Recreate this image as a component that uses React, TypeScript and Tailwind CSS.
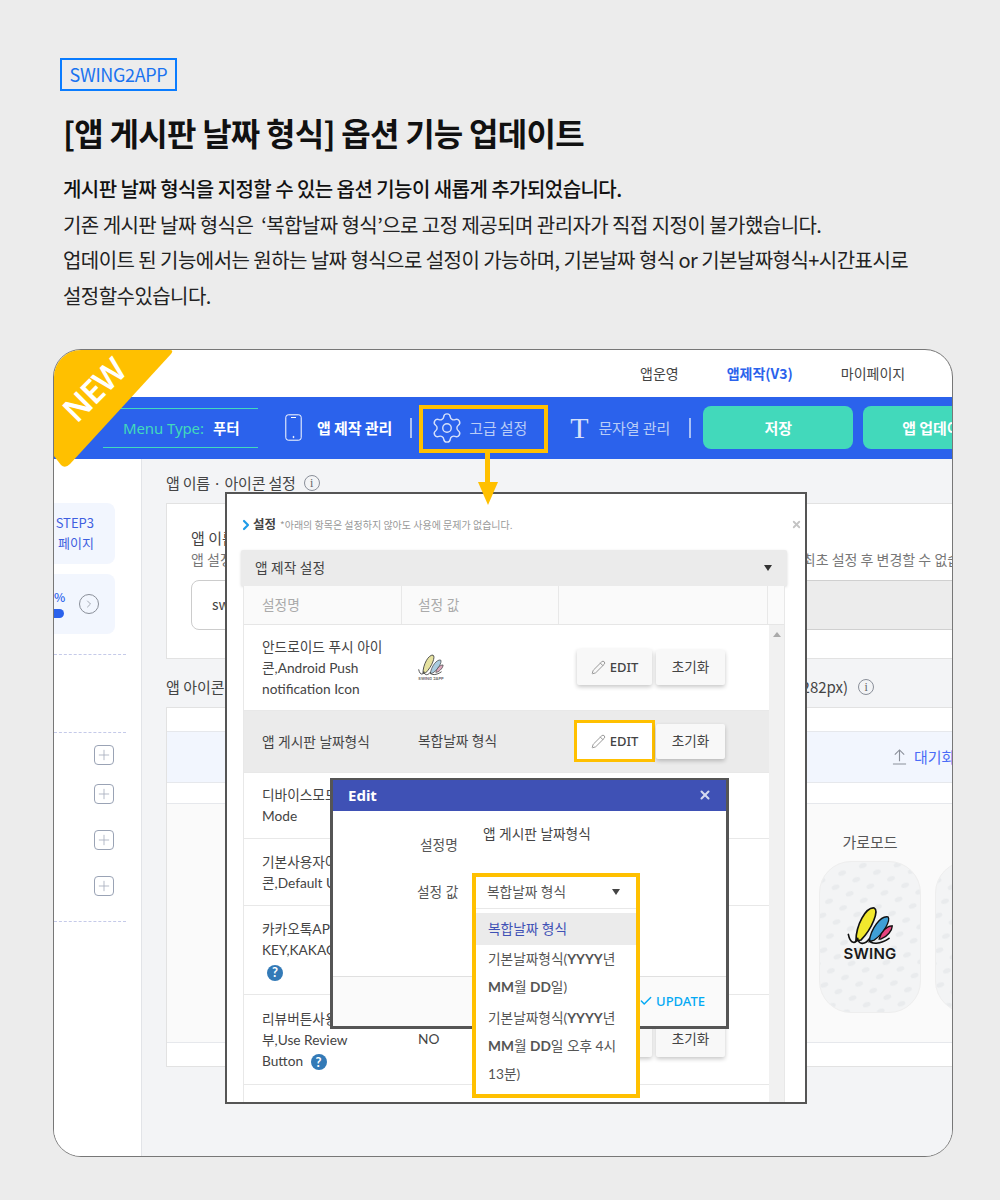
import React from "react";
import { Settings, Pencil, Check, ChevronRight, X } from "lucide-react";

const KR = { fontFamily: '"Noto Sans CJK KR", sans-serif' };
const TB = { fontFamily: 'Lato, "Noto Sans CJK KR", sans-serif' };
const NS = { fontFamily: '"Noto Sans", "Noto Sans CJK KR", sans-serif' };

function Logo({ className, small }: { className: string; small?: boolean }) {
  return (
    <div className={`flex flex-col items-center ${className}`}>
      <svg viewBox="318 742 142 120" className="w-full block">
        <path d="M345 848C345 800 375 745 400 748C415 755 395 810 360 845Z" fill={small ? "#e6e2a0" : "#f2e82d"} stroke={small ? "#444" : "#111"} strokeWidth="5" />
        <path d="M385 850C390 810 420 770 442 775C450 785 430 825 400 845Z" fill={small ? "#a9cbe0" : "#3f9fd6"} stroke={small ? "#444" : "#111"} strokeWidth="4" />
        <path d="M415 842C420 820 440 800 455 802C455 815 440 835 420 842Z" fill={small ? "#e0a9c0" : "#e8447f"} stroke={small ? "#444" : "#111"} strokeWidth="4" />
        <path d="M322 828C328 858 345 858 350 838C352 860 372 860 385 842C388 860 420 858 445 840" fill="none" stroke={small ? "#444" : "#111"} strokeWidth="5" strokeLinecap="round" />
      </svg>
      <span className={small ? "text-[4px] leading-[5px] text-[#666] font-semibold whitespace-nowrap" : "text-[15px] leading-[15px] font-semibold text-[#1a1a1a] tracking-[0.2px]"} style={{ fontFamily: "Inter, sans-serif" }}>
        {small ? "SWING 2APP" : "SWING"}
      </span>
    </div>
  );
}

function Info() {
  return (
    <span className="inline-flex items-center justify-center w-4 h-4 rounded-full border border-[#8a8f99] text-[12px] leading-none text-[#666]" style={{ fontFamily: '"Liberation Serif", serif' }}>
      i
    </span>
  );
}

function PlusBox() {
  return (
    <span className="flex items-center justify-center w-5 h-5 rounded-[4px] border border-[#9aa3b5]">
      <svg viewBox="0 0 14 14" className="w-3 h-3">
        <path d="M7 1v12M1 7h12" stroke="#a8afbf" strokeWidth="1" />
      </svg>
    </span>
  );
}

function Help() {
  return (
    <span className="inline-flex items-center justify-center w-4 h-4 rounded-full bg-[#337ab7] text-white text-[13px] font-bold leading-none align-middle">?</span>
  );
}

function IconTile() {
  return (
    <div className="relative w-[102px] h-[152px] shrink-0 rounded-[32px] bg-[#f3f4f5] border border-[#eeeeee] overflow-hidden flex items-center justify-center">
      <svg className="absolute inset-0 w-full h-full">
        <defs>
          <pattern id="tile" width="22" height="22" patternUnits="userSpaceOnUse" patternTransform="rotate(-20)">
            <ellipse cx="6" cy="7" rx="4" ry="2.5" fill="#e9ebed" />
            <ellipse cx="17" cy="18" rx="4" ry="2.5" fill="#e9ebed" />
          </pattern>
        </defs>
        <rect width="100%" height="100%" fill="url(#tile)" />
      </svg>
      <Logo className="relative w-[47px] -mt-[6px]" />
    </div>
  );
}

function Btns({ hl }: { hl?: boolean }) {
  return (
    <div className="flex items-center gap-1" style={NS}>
      <div className={hl ? "border-[3px] border-[#ffc000] -m-[3px] bg-white" : ""}>
        <button className={`flex items-center justify-center gap-1 w-[75px] h-9 rounded-[2px] text-[13px] font-medium text-[#444] ${hl ? "bg-white" : "bg-[#f8f8f8] shadow-[0_2px_4px_rgba(0,0,0,0.22)]"}`}>
          <Pencil className="w-[15px] h-[15px] text-[#999]" strokeWidth={1.6} />
          EDIT
        </button>
      </div>
      <button className="w-[69px] h-[35px] rounded-[2px] bg-[#f8f8f8] text-[13.6px] text-[#444] shadow-[0_2px_4px_rgba(0,0,0,0.22)]">초기화</button>
    </div>
  );
}

function Row({ h, name, value, hl, btns, edit }: { h: string; name: React.ReactNode; value?: React.ReactNode; hl?: boolean; btns?: boolean; edit?: boolean }) {
  return (
    <div className={`flex items-center border-b border-[#e8e8e8] ${h} ${hl ? "bg-[#ebebeb]" : "bg-white"}`}>
      <div className="w-[158px] shrink-0 pl-[18px] text-[13.7px] leading-[21px] text-[#444] whitespace-nowrap overflow-hidden">{name}</div>
      <div className="w-[157px] shrink-0 pl-4 text-[13.7px] text-[#444]">{value}</div>
      <div className="pl-[18px]">{btns && <Btns hl={edit} />}</div>
    </div>
  );
}

export default function App() {
  return (
    <div className="w-[1000px] h-[1200px] bg-[#ececec] overflow-hidden px-[53px] pt-[58px]" style={KR}>
      <div className="px-[7px]">
        <div className="w-[117px] h-[33px] border-2 border-[#0a7cff] text-[#1a73f0] text-[18px] leading-[29px] tracking-[-0.35px] text-center" style={KR}>SWING2APP</div>
        <h1 className="mt-[18px] pl-[3px] text-[32px] leading-[46px] font-bold text-[#111] tracking-[-0.75px] whitespace-nowrap">[앱 게시판 날짜 형식] 옵션 기능 업데이트</h1>
        <div className="mt-[16px] pl-[3px] text-[20px] leading-[35.7px] text-[#222] tracking-[-0.55px] whitespace-pre">
          <p className="font-medium text-[#111]">게시판 날짜 형식을 지정할 수 있는 옵션 기능이 새롭게 추가되었습니다.</p>
          <p>기존 게시판 날짜 형식은  ‘복합날짜 형식’으로 고정 제공되며 관리자가 직접 지정이 불가했습니다.</p>
          <p>업데이트 된 기능에서는 원하는 날짜 형식으로 설정이 가능하며, 기본날짜 형식 or 기본날짜형식+시간표시로</p>
          <p>설정할수있습니다.</p>
        </div>
      </div>

      <div className="relative mt-[35px] w-[900px] h-[808px] bg-white border border-[#777] rounded-[28px] overflow-hidden flex flex-col">
        <nav className="h-[47px] shrink-0 flex items-center pl-[586px] text-[14px] text-[#444] whitespace-nowrap">
          <span>앱운영</span>
          <span className="ml-[48px] font-bold text-[#2b62ec]">앱제작(V3)</span>
          <span className="ml-[48px]">마이페이지</span>
        </nav>

        <div className="h-[62px] shrink-0 bg-[#2b62ec] flex items-center whitespace-nowrap overflow-hidden text-[15px] tracking-[-0.1px]">
          <div className="ml-[49px] w-[155px] h-[40px] shrink-0 border-y border-[#42d9bb] flex items-center pl-5">
            <span className="text-[#42d9bb] text-[15px]" style={{ fontFamily: '"Noto Sans", sans-serif' }}>Menu Type:</span>
            <span className="ml-[9px] text-white font-bold text-[14.5px]">푸터</span>
          </div>
          <svg viewBox="0 0 17 27" className="ml-[27px] w-[17px] h-[27px] shrink-0" fill="none" stroke="#fff" strokeWidth="1">
            <rect x="0.8" y="0.8" width="15.4" height="25.4" rx="2.5" />
            <path d="M6 3.5h5" />
            <circle cx="8.5" cy="23" r="0.6" fill="#fff" />
          </svg>
          <span className="ml-[15px] font-bold text-white">앱 제작 관리</span>
          <span className="ml-[18px] w-[2px] h-[20px] shrink-0 bg-[#a9c0f5]" />
          <Settings className="ml-[18px] w-[34px] h-[34px] text-[#d5e0fa] shrink-0" strokeWidth={1} />
          <span className="ml-[5px] text-[#b9cdf7]">고급 설정</span>
          <span className="ml-[43px] text-[30px] leading-none text-[#d5e0fa]" style={{ fontFamily: '"Liberation Serif", serif' }}>T</span>
          <span className="ml-[10px] text-[#b9cdf7]">문자열 관리</span>
          <span className="ml-[19px] w-[2px] h-[20px] shrink-0 bg-[#a9c0f5]" />
          <button className="ml-[12px] w-[150px] h-[43px] shrink-0 rounded-[8px] bg-[#42d9bb] text-white font-bold">저장</button>
          <button className="ml-[10px] w-[150px] h-[43px] shrink-0 rounded-[8px] bg-[#42d9bb] text-white font-bold">앱 업데이트</button>
        </div>

        <div className="flex-1 flex min-h-0">
          <aside className="w-[88px] shrink-0 bg-white border-r border-[#e2e4e8] pt-[44px] overflow-hidden">
            <div className="w-[61px] h-[61px] bg-[#f2f6fe] rounded-r-[8px] flex flex-col items-end justify-center pr-[21px] text-[13px] leading-[20px] text-[#3f5fe0]">
              <span>STEP3</span>
              <span>페이지</span>
            </div>
            <div className="mt-[10px] w-[61px] h-[60px] bg-[#f2f6fe] rounded-r-[8px] flex items-center">
              <div className="w-[11px] flex flex-col items-start">
                <span className="text-[12px] leading-[16px] font-medium text-[#2b62ec]">%</span>
                <span className="w-[10px] h-[9px] mt-1 bg-[#2b62ec] rounded-r-full" />
              </div>
              <span className="ml-[14px] w-5 h-5 rounded-full border border-[#8a8f99] flex items-center justify-center">
                <ChevronRight className="w-3 h-3 text-[#8a8f99]" strokeWidth={1.5} />
              </span>
            </div>
            <div className="mt-[20px] w-[72px] border-t border-dashed border-[#c5cae9]" />
            <div className="mt-[77px] w-[72px] border-t border-dashed border-[#c5cae9]" />
            <div className="mt-[12px] pl-[40px] flex flex-col">
              <PlusBox />
              <div className="mt-[19px]"><PlusBox /></div>
              <div className="mt-[26px]"><PlusBox /></div>
              <div className="mt-[26px]"><PlusBox /></div>
            </div>
            <div className="mt-[25px] w-[72px] border-t border-dashed border-[#c5cae9]" />
          </aside>

          <main className="flex-1 min-w-0 bg-[#f3f4f6] pl-[24px] overflow-hidden">
            <div className="w-[900px]">
              <div className="h-[44px] flex items-center gap-2 text-[15px] tracking-[-0.2px] text-[#444] pt-[5px]">
                <span>앱 이름 · 아이콘 설정</span>
                <Info />
              </div>
              <section className="h-[156px] bg-white border border-[#e2e2e2] pt-[24px]">
                <div className="pl-[24px] text-[15px] leading-[20px] text-[#444]">앱 이름</div>
                <div className="flex pl-[24px] text-[14px] leading-[22px] text-[#777]">
                  <span>앱 설정</span>
                  <span className="ml-[570px] whitespace-nowrap">최초 설정 후 변경할 수 없습니다</span>
                </div>
                <div className="flex mt-[10px]">
                  <div className="ml-[24px] w-[400px] h-[50px] border border-[#ccc] rounded-[8px] flex items-center pl-5 text-[14px] text-[#444]">swing</div>
                  <div className="w-[476px] h-[50px] border-y border-[#d0d0d0] bg-[#ececec]" />
                </div>
              </section>
              <div className="h-[48px] flex items-center text-[15px] text-[#444] pt-[8px]">
                <span>앱 아이콘 설정</span>
                <span className="ml-[541px]">(282px)</span>
                <span className="ml-[10px] flex"><Info /></span>
              </div>
              <section className="h-[360px] bg-white border border-[#e2e2e2] pt-[23px]">
                <div className="h-[52px] bg-[#f2f6fe] border-y border-[#e6e8ec] flex items-center pl-[725px] text-[15px] text-[#4a6cf7]">
                  <svg viewBox="0 0 16 18" className="w-[15px] h-[17px] mr-[7px]">
                    <path d="M8 14V2M3 7l5-5 5 5M1 17h14" fill="none" stroke="#8a8f99" strokeWidth="1.2" />
                  </svg>
                  대기화면
                </div>
                <div className="mt-[20px] h-[240px] bg-[#fafafa] border-y border-[#e6e8ec] pl-[652px] pt-[26px]">
                  <div className="text-[15px] leading-[24px] text-[#555] w-[102px] text-center">가로모드</div>
                  <div className="flex gap-[14px] mt-[7px]">
                    <IconTile />
                    <IconTile />
                  </div>
                </div>
              </section>
            </div>
          </main>
        </div>

        {/* NEW ribbon */}
        <svg viewBox="0 0 120 120" className="absolute left-0 top-0 w-[120px] h-[120px]">
          <path d="M0 0H116Q120 0 117 4L16 114Q11 119 7 115L0 106Z" fill="#ffc000" />
        </svg>
        <span className="absolute left-0 top-[24px] w-[80px] text-center text-white text-[33px] leading-[32px] font-semibold -rotate-45 tracking-[-1px]" style={{ fontFamily: '"Noto Sans", sans-serif' }}>NEW</span>

        {/* highlight over 고급 설정 */}
        <div className="absolute left-[365px] top-[55px] w-[129px] h-[48px] border-[4px] border-[#ffc000]" />
        <div className="absolute left-[431px] top-[102px] w-[5px] h-[32px] bg-[#ffc000]" />

        {/* settings window */}
        <div className="absolute left-[171px] top-[142px] w-[582px] h-[612px] border-2 border-[#555] bg-white flex flex-col" style={TB}>
          <div className="h-[56px] shrink-0 flex items-center pl-[14px] pt-[6px]" style={KR}>
            <ChevronRight className="w-[16px] h-[20px] -ml-[3px] -mr-[1px] text-[#1e9be8]" strokeWidth={3.2} />
            <span className="text-[12.5px] font-bold text-[#444]">설정</span>
            <span className="ml-1 text-[10px] text-[#999]">*아래의 항목은 설정하지 않아도 사용에 문제가 없습니다.</span>
            <X className="ml-auto mr-[3px] w-[11px] h-[11px] text-[#c4c4c4]" strokeWidth={4} />
          </div>
          <div className="ml-[14px] mr-[18px] h-[36px] shrink-0 bg-[#ebebeb] rounded-[2px] shadow-[0_1px_3px_rgba(0,0,0,0.15)] flex items-center pl-[14px] pr-[15px] text-[13.7px] text-[#444]">
            앱 제작 설정
            <svg viewBox="0 0 8 6" className="ml-auto w-2 h-[6px]"><path d="M0 0h8L4 6z" fill="#333" /></svg>
          </div>
          <div className="ml-[16px] mr-[20px] flex-1 min-h-0 border-x border-[#e8e8e8] flex flex-col overflow-hidden">
            <div className="h-[39px] shrink-0 bg-[#fafafa] border-b border-[#e6e6e6] flex text-[13.7px] text-[#aaa]">
              <div className="w-[158px] border-r border-[#e8e8e8] pl-[18px] flex items-center">설정명</div>
              <div className="w-[157px] border-r border-[#e8e8e8] pl-4 flex items-center">설정 값</div>
              <div className="flex-1 border-r border-[#e8e8e8]" />
              <div className="w-[16px]" />
            </div>
            <div className="flex-1 min-h-0 flex overflow-hidden">
              <div className="w-[525px] shrink-0 overflow-hidden">
                <Row h="h-[86px]" name={<>안드로이드 푸시 아이<br />콘,Android Push<br />notification Icon</>} value={<Logo small className="w-[26px]" />} btns />
                <Row h="h-[62px]" hl name="앱 게시판 날짜형식" value="복합날짜 형식" btns edit />
                <Row h="h-[66px]" name={<>디바이스모드,Device<br />Mode</>} />
                <Row h="h-[67px]" name={<>기본사용자아이<br />콘,Default User</>} />
                <Row h="h-[89px]" name={<>카카오톡API<br />KEY,KAKAO<br /><span className="pl-[5px]"><Help /></span></>} />
                <Row h="h-[90px]" name={<>리뷰버튼사용여<br />부,Use Review<br />Button <span className="ml-1"><Help /></span></>} value="NO" btns />
                <Row h="h-[60px]" name="" />
              </div>
              <div className="flex-1 bg-[#f1f1f1] flex justify-center pt-[7px]">
                <svg viewBox="0 0 8 5" className="w-2 h-[5px]"><path d="M4 0l4 5H0z" fill="#aaa" /></svg>
              </div>
            </div>
          </div>
        </div>

        {/* arrow head */}
        <svg viewBox="0 0 20 23" className="absolute left-[424px] top-[132px] w-5 h-[23px]">
          <path d="M0 0h20L10 23z" fill="#ffc000" />
        </svg>

        {/* edit dialog */}
        <div className="absolute left-[276px] top-[428px] w-[399px] h-[251px] border-[3px] border-[#555] bg-white flex flex-col" style={TB}>
          <div className="h-[31px] shrink-0 bg-[#3f51b5] flex items-center px-[15px] text-white text-[15px] font-bold -mt-[1px]" style={NS}>
            Edit
            <X className="ml-auto w-[14px] h-[14px] text-[#d5d9f0] -mr-[1px]" strokeWidth={3.5} />
          </div>
          <div className="h-[165px] shrink-0 pl-[87px] pt-[13px] text-[13.7px] text-[#555] whitespace-nowrap">
            <div className="flex">
              <span className="w-[63px] pt-[11px] shrink-0">설정명</span>
              <span className="text-[#444]">앱 게시판 날짜형식</span>
            </div>
            <div className="mt-[16px] pt-[11px] -ml-[3px]">설정 값</div>
          </div>
          <div className="flex-1 bg-[#fafafa] border-t border-[#e0e0e0] flex items-center justify-end pr-[21px] text-[13px] font-medium text-[#03a9f4]" style={NS}>
            <Check className="w-[14px] h-[14px] mr-[3px]" strokeWidth={2.5} />
            UPDATE
          </div>
        </div>

        {/* dropdown */}
        <div className="absolute left-[418px] top-[523px] w-[168px] h-[225px] border-[4px] border-[#ffc000] bg-white text-[13.7px] text-[#555] whitespace-nowrap" style={TB}>
          <div className="h-[32px] border-b border-[#e8e8e8] flex items-center pl-[11px] pr-[16px]">
            복합날짜 형식
            <svg viewBox="0 0 8 6" className="ml-auto w-2 h-[6px]"><path d="M0 0h8L4 6z" fill="#444" /></svg>
          </div>
          <div className="pt-[4px]">
            <div className="h-[32px] bg-[#ebebeb] flex items-center pl-[12px] text-[#3f51b5]">복합날짜 형식</div>
            <div className="px-[12px] leading-[28px]">
              기본날짜형식(<b>YYYY</b>년<br /><b>MM</b>월 <b>DD</b>일)
            </div>
            <div className="px-[12px] leading-[28px] mt-[3px]">
              기본날짜형식(<b>YYYY</b>년<br /><b>MM</b>월 <b>DD</b>일 오후 4시<br />13분)
            </div>
          </div>
        </div>
      </div>
    </div>
  );
}
